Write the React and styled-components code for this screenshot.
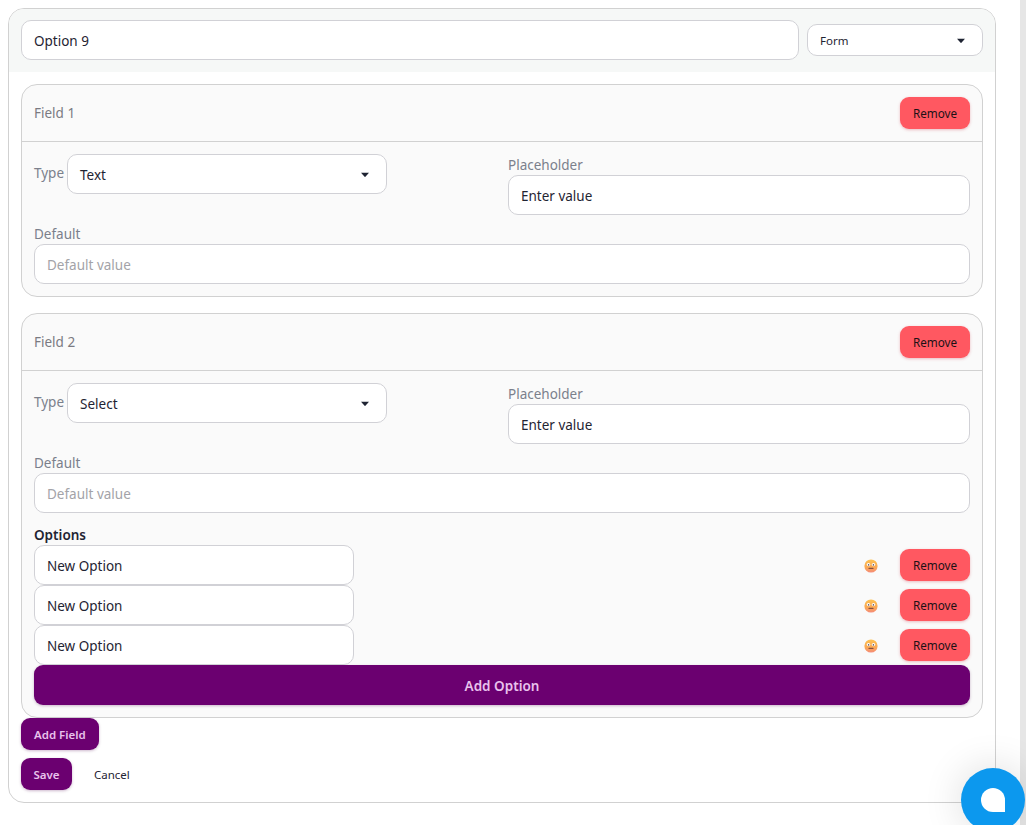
import React from "react";
import styled, { createGlobalStyle } from "styled-components";

const Global = createGlobalStyle`
  html, body { margin: 0; padding: 0; height: 100%; overflow: hidden; background: #fff; }
  body { font-family: "Noto Sans", "Open Sans", Arial, sans-serif; font-size: 13.5px; color: #1f2433; }
  * { box-sizing: border-box; }
`;
const Shell = styled.div`display: flex; height: 100vh; overflow: hidden;`;
const Main = styled.main`flex: 1; padding: 8px 24px 8px 8px; min-width: 0;`;
const Rail = styled.div`width: 6px; background: #e6e6e6;`;
const Card = styled.section`border: 1px solid #d1d1d1; border-radius: 16px; overflow: hidden; background: #fff; height: 795px;`;
const TopBand = styled.header`display: flex; align-items: center; gap: 8px; padding: 11px 12px 12px; background: #f6f8f7;`;
const Input = styled.input`
  display: block; height: 40px; width: ${(p) => p.$width || "100%"}; padding: 2px 12px 0; flex: ${(p) => p.$grow ? 1 : "none"};
  border: 1px solid #d1d1d6; border-radius: 10px; background: #fff; color: #1f2433; font: 13.5px "Noto Sans", sans-serif; outline: none;
  &::placeholder { color: #a3a3a8; opacity: 1; }
`;
const SelectBox = styled.div`
  display: flex; align-items: center; justify-content: space-between; flex: none;
  width: ${(p) => p.$small ? "176px" : "320px"}; height: ${(p) => p.$small ? "32px" : "40px"};
  padding: 1px 16px 0 12px;
  border: 1px solid #d1d1d6; border-radius: 10px; background: #fff; font-size: ${(p) => p.$small ? "11.5px" : "13.5px"};
`;
const Body = styled.div`display: flex; flex-direction: column; padding: 12px 12px 0;`;
const FieldCard = styled.article`border: 1px solid #d1d1d1; border-radius: 16px; background: #fafafa; margin-bottom: ${(p) => p.$last ? "0" : "16px"};`;
const FieldHead = styled.div`display: flex; align-items: center; justify-content: space-between; height: 57px; padding: 0 12px; border-bottom: 1px solid #d1d1d1; color: #7a7a82;`;
const FieldBody = styled.div`padding: 12px 12px 12px;`;
const TwoCol = styled.div`display: grid; grid-template-columns: 1fr 1fr; column-gap: 12px; margin-bottom: 8px;`;
const TypeRow = styled.div`display: flex; align-items: center; gap: 3px; height: 40px; align-self: start;`;
const Label = styled.label`display: block; height: 21px; padding-top: 1px; color: #7b808c; font-size: 13.5px; line-height: 21px;`;
const InlineLabel = styled(Label)`padding-top: 0; margin-bottom: 2px;`;
const OptionsTitle = styled.div`font-size: 13.5px; font-weight: 600; line-height: 20px; margin-top: 12px; color: #1f2433;`;
const OptionRow = styled.div`display: flex; align-items: center; justify-content: space-between;`;
const OptionEnd = styled.div`display: flex; align-items: center; gap: 22px;`;
const Btn = styled.button`
  display: inline-flex; align-items: center; justify-content: center; height: 32px; padding: 0 13px; border: 0; border-radius: 9px;
  font: 600 11.5px "Noto Sans", sans-serif; background: #6b0070; color: #e8c2ec;
  box-shadow: 0 1px 3px rgba(80, 0, 80, .28);
`;
const DangerBtn = styled(Btn)`width: 70px; padding: 0; font-weight: 400; font-size: 11.7px; background: #ff5861; color: #1c1216; box-shadow: 0 1px 3px rgba(200, 40, 60, .3);`;
const WideBtn = styled(Btn)`display: flex; width: 100%; height: 40px; padding-top: 1px; font-size: 13.5px;`;
const SaveBtn = styled(Btn)`width: 51px; padding: 0;`;
const GhostBtn = styled.button`height: 32px; padding: 0 22px; border: 0; background: transparent; color: #1f2433; font: 400 11.5px "Noto Sans", sans-serif;`;
const Actions = styled.div`display: flex; margin-top: 8px;`;
const AddRow = styled.div`display: flex;`;
const Chat = styled.div`
  position: fixed; right: 1px; bottom: -7px; width: 64px; height: 64px; border-radius: 50%; background: #0c98ee;
  display: flex; align-items: center; justify-content: center; box-shadow: 0 0 40px rgba(0,0,0,.14);
`;
const ChatBubble = styled.div`width: 24px; height: 24px; background: #fff; border-radius: 50% 50% 0 50%;`;

const Caret = () => (
  <svg width="10" height="6" viewBox="0 0 10 6"><path d="M1 .8h8L5.4 4.8a.6.6 0 0 1-.8 0z" fill="#1f2433" /></svg>
);
const EmojiWrap = styled.span`display: flex; margin-top: 2px;`;
const Emoji = () => (
  <EmojiWrap>
    <svg width="14" height="14" viewBox="0 0 14 14">
      <defs><linearGradient id="em" x1="0" y1="0" x2="0" y2="1"><stop offset="0" stopColor="#fdc24f" /><stop offset=".65" stopColor="#f9a657" /><stop offset="1" stopColor="#f58a7a" /></linearGradient></defs>
      <circle cx="7" cy="7" r="6.6" fill="url(#em)" />
      <circle cx="4.5" cy="5.6" r="1.7" fill="#fff" /><circle cx="9.5" cy="5.6" r="1.7" fill="#fff" />
      <circle cx="4.6" cy="5.9" r=".8" fill="#6b5a5a" /><circle cx="9.4" cy="5.9" r=".8" fill="#6b5a5a" />
      <path d="M5 9.4h4" stroke="#8a4f3a" strokeWidth="1.1" strokeLinecap="round" />
    </svg>
  </EmojiWrap>
);

const Remove = () => <DangerBtn>Remove</DangerBtn>;

const FieldInner = ({ type }) => (
  <>
    <TwoCol>
      <TypeRow>
        <InlineLabel>Type</InlineLabel>
        <SelectBox>{type}<Caret /></SelectBox>
      </TypeRow>
      <div>
        <Label>Placeholder</Label>
        <Input readOnly value="Enter value" />
      </div>
    </TwoCol>
    <Label>Default</Label>
    <Input readOnly placeholder="Default value" />
  </>
);

export default function App() {
  return (
    <Shell>
      <Global />
      <Main>
        <Card>
          <TopBand>
            <Input $grow readOnly value="Option 9" />
            <SelectBox $small>Form<Caret /></SelectBox>
          </TopBand>
          <Body>
            <FieldCard>
              <FieldHead>Field 1<Remove /></FieldHead>
              <FieldBody><FieldInner type="Text" /></FieldBody>
            </FieldCard>
            <FieldCard $last>
              <FieldHead>Field 2<Remove /></FieldHead>
              <FieldBody>
                <FieldInner type="Select" />
                <OptionsTitle>Options</OptionsTitle>
                {[0, 1, 2].map((i) => (
                  <OptionRow key={i}>
                    <Input $width="320px" readOnly value="New Option" />
                    <OptionEnd><Emoji /><Remove /></OptionEnd>
                  </OptionRow>
                ))}
                <WideBtn>Add Option</WideBtn>
              </FieldBody>
            </FieldCard>
            <AddRow><Btn>Add Field</Btn></AddRow>
            <Actions><SaveBtn>Save</SaveBtn><GhostBtn>Cancel</GhostBtn></Actions>
          </Body>
        </Card>
      </Main>
      <Rail />
      <Chat><ChatBubble /></Chat>
    </Shell>
  );
}
